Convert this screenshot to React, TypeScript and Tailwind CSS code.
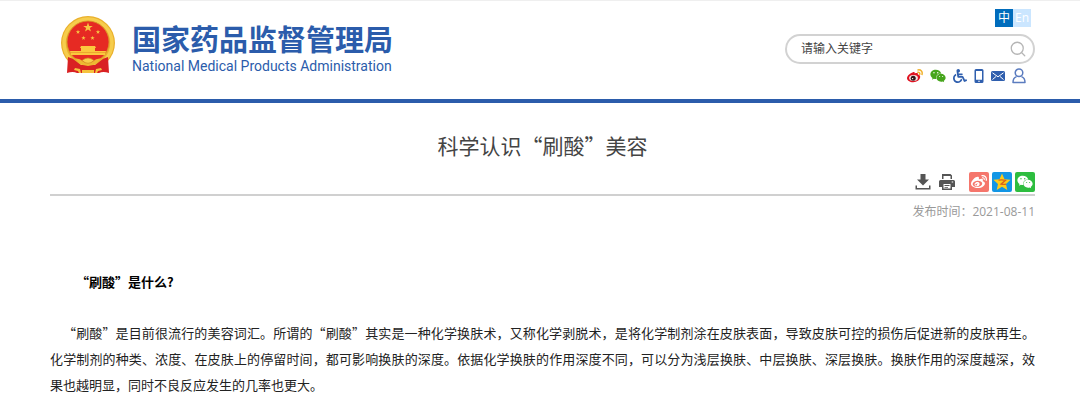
import { Search } from 'lucide-react';
import { FaWeibo, FaWeixin, FaWheelchair } from 'react-icons/fa';

const cjk = "font-['Open_Sans','Noto_Sans_CJK_SC',sans-serif]";

function Star({ x, y, r }: { x: number; y: number; r: number }) {
  return (
    <path
      transform={`translate(${x} ${y}) scale(${r})`}
      d="M0-1 .24-.32.95-.31.38.12.59.81 0 .4-.59.81-.38.12-.95-.31-.24-.32Z"
    />
  );
}

function Emblem() {
  return (
    <svg viewBox="0 0 56 60" className="h-[60px] w-14 shrink-0" aria-hidden="true">
      <circle cx="28" cy="28" r="27" fill="#eab02c" />
      <circle cx="28" cy="28" r="24" fill="none" stroke="#f6cd4c" strokeWidth="3.500" />
      <circle cx="28" cy="27" r="21" fill="#e62a23" stroke="#d9952a" strokeWidth=".8" />
      <g fill="#f8c443">
        <Star x={28} y={12.5} r={5} />
        <Star x={18} y={17} r={2.3} />
        <Star x={38} y={17} r={2.3} />
        <Star x={23.5} y={23} r={2.3} />
        <Star x={32.500} y={23} r={2.3} />
      </g>
      <path d="M21 31h14l1 2h-1v3h11l-1 4H11l-1-4h11v-3h-1Z" fill="#fbc83e" />
      <path d="M10 37.500h36" stroke="#e59a2a" strokeWidth=".7" />
      <path d="M8 42q5 1 9 5l4 3h14l4-3q4-4 9-5l1 16q-6-2-10 0H17q-4-2-10 0Z" fill="#d92123" />
      <path
        d="M15 43.500q5-.5 7.500 2.500 5.500 5 11 0 2.500-3 7.500-2.500l-4 4.500q-4 3-9 3t-9-3Z"
        fill="#edb832"
      />
      <path d="M22 45.500q6-5 12 0-6 5.500-12 0Z" fill="#f8cf4b" stroke="#d58e24" strokeWidth=".7" />
      <path d="m15 53 5 1 1 4h-2l-1-2-4-1Zm26 0-5 1-1 4h2l1-2 4-1ZM22 55h12v3H22Z" fill="#f5c33e" />
    </svg>
  );
}

function WeiboColor() {
  return (
    <svg viewBox="0 0 16 14" className="h-3.5 w-4">
      <path
        d="M6 3.2c1.2-.5 2 .1 1.7 1.2 1.8-.8 3.6-.6 3.2 1 1.2.3 2.4 1 2.3 2.6-.2 3-3.4 5.2-7 5.2C2.800 13.200 0 11.500 0 9.200 0 7 3 4 6 3.200Z"
        fill="#e01220"
      />
      <ellipse cx="6.500" cy="9" rx="4.400" ry="3" fill="#f4e4e4" />
      <circle cx="6.200" cy="9.200" r="2.500" fill="#33191b" />
      <circle cx="5.600" cy="9.600" r=".7" fill="#fff" />
      <path d="M11 .9c3-.5 4.800 2 4 4.500M10.800 3.200c1.500-.2 2.300.8 1.900 2" fill="none" stroke="#f1b22e" strokeWidth="1.500" strokeLinecap="round" />
    </svg>
  );
}

function Phone() {
  return (
    <svg viewBox="0 0 10 14" className="h-3.5 w-2.5" fill="#2f5fae">
      <path fillRule="evenodd" d="M2 0h6q1.500 0 1.500 1.500v11Q9.500 14 8 14H2Q.5 14 .5 12.500v-11Q.5 0 2 0Zm0 2v8.800h6V2Zm2.200 9.700v1h1.600v-1Z" />
    </svg>
  );
}

function Mail() {
  return (
    <svg viewBox="0 0 14 10" className="h-2.5 w-3.5">
      <rect width="14" height="10" rx="1.500" fill="#2f5fae" />
      <path d="m1.500 1.800 5.500 4 5.500-4M1.500 8.500l3.500-3m7.500 3L9 5.500" fill="none" stroke="#fff" strokeWidth="1" />
    </svg>
  );
}

function User() {
  return (
    <svg viewBox="0 0 14 16" className="h-4 w-3.5" fill="none" stroke="#5b7cbf" strokeWidth="1.500">
      <circle cx="7" cy="4.800" r="3.800" />
      <path d="M4.500 8.600C2 9.500 1 11.500 1 14.500h12c0-3-1-5-3.500-5.900" strokeLinejoin="round" />
    </svg>
  );
}

function Download() {
  return (
    <svg viewBox="0 0 16 16" className="size-4" fill="#555">
      <path d="M5.500 0h5v5.500h3.500L8 11.500 2 5.500h3.500ZM.5 11.500H2V14h12v-2.500h1.500v4H.5Z" />
    </svg>
  );
}

function Printer() {
  return (
    <svg viewBox="0 0 16 16" className="size-4" fill="#555">
      <path fillRule="evenodd" d="M3 0h8.500L13 1.500V5h-1.500V2H4.500v3H3ZM1.500 6h13Q16 6 16 7.500V13h-3v3H3v-3H0V7.500Q0 6 1.500 6Zm3 4v4.500h7V10Zm8.200-2.500v1h1.500v-1Z" />
      <path d="M5.500 11h5v1h-5Zm0 2H9v.8H5.500Z" />
    </svg>
  );
}

function QzoneStar() {
  return (
    <svg viewBox="0 0 18 18" className="size-[18px]">
      <path d="m9 .5 2.500 5.700 6.100.6-4.600 4.100 1.300 6.100L9 13.800 3.700 17 5 10.900.4 6.800l6.100-.6Z" fill="#fccb19" />
      <path d="M5.500 7.200q3.500-.7 7 .1L8 11.200q2.500.4 5.200-.1" fill="none" stroke="#d9621c" strokeWidth="1.300" />
    </svg>
  );
}

function Header() {
  return (
    <header className="border-b-4 border-[#2b5cab] bg-white">
      <div className="flex h-[98px] items-start justify-between pl-[60px] pr-[45px]">
        <a href="#home" className="flex gap-4 pt-3.5 text-[#2b5cab]">
          <Emblem />
          <span className="flex flex-col pt-1.5">
            <span className="whitespace-nowrap font-['Noto_Sans_CJK_SC',sans-serif] text-[29px] font-bold leading-[34px]">
              国家药品监督管理局
            </span>
            <span className="whitespace-nowrap font-['Roboto',sans-serif] text-[14px] leading-[22px]">
              National Medical Products Administration
            </span>
          </span>
        </a>
        <div className="flex w-[250px] flex-col items-end pt-2">
          <div className="mr-1 flex text-[12px] leading-[18px] text-white">
            <button type="button" className="w-[18px] bg-[#006cbc]">中</button>
            <button type="button" className="w-[18px] bg-[#cbe6ff]">En</button>
          </div>
          <form className="mt-[7px] flex h-[30px] w-full items-center rounded-full border-2 border-[#d2d2d2] pl-3.5 pr-1.5">
            <input
              type="text"
              aria-label="请输入关键字"
              placeholder="请输入关键字"
              className="min-w-0 flex-1 text-[12px] leading-[18px] outline-none placeholder:text-[#444]"
            />
            <button type="button" aria-label="搜索">
              <Search className="size-[18px] text-[#b5b5b5]" strokeWidth={1.7} />
            </button>
          </form>
          <nav className="mr-[9px] mt-1 flex h-4 items-center gap-[7px]">
            <a href="#weibo" aria-label="微博"><WeiboColor /></a>
            <a href="#weixin" aria-label="微信"><FaWeixin className="size-4 text-[#46a51c]" /></a>
            <a href="#access" aria-label="无障碍"><FaWheelchair className="size-3.5 text-[#2f5fae]" /></a>
            <a href="#mobile" aria-label="手机版"><Phone /></a>
            <a href="#mail" aria-label="邮箱"><Mail /></a>
            <a href="#user" aria-label="用户"><User /></a>
          </nav>
        </div>
      </div>
    </header>
  );
}

export default function App() {
  return (
    <div className={`${cjk} border-t border-[#efefef] bg-white`} lang="zh-CN">
      <Header />
      <main className="pl-[50px] pr-[45px]">
        <h1 className="pt-[26px] text-center font-['Noto_Sans_CJK_SC',sans-serif] text-[21px] leading-8 text-[#444]">
          科学认识“刷酸”美容
        </h1>
        <div className="mt-[11px] flex items-center justify-end border-b-2 border-[#d0d0d0] pb-0.5">
          <button type="button" aria-label="下载" className="mr-2"><Download /></button>
          <button type="button" aria-label="打印" className="mr-3.5"><Printer /></button>
          <div className="flex gap-[3px]">
            <a href="#share-weibo" aria-label="分享到微博" className="flex size-5 items-center justify-center rounded-xs bg-[#f5766c]">
              <FaWeibo className="size-4 text-white" />
            </a>
            <a href="#share-qzone" aria-label="分享到QQ空间" className="flex size-5 items-center justify-center rounded-xs bg-[#1296e5]">
              <QzoneStar />
            </a>
            <a href="#share-weixin" aria-label="分享到微信" className="flex size-5 items-center justify-center rounded-xs bg-[#2dbd3f]">
              <FaWeixin className="size-4 text-white" />
            </a>
          </div>
        </div>
        <p className="mt-1.5 text-right text-[12px] leading-5 text-[#999]">发布时间：2021-08-11</p>
        <article className="mt-[47px] font-['Noto_Sans_CJK_SC',sans-serif] text-[13px] leading-[26px] text-[#222]">
          <h2 className="indent-[26px] font-bold text-black">“刷酸”是什么?</h2>
          <p className="mt-[25px] indent-[13px] text-justify">
            “刷酸”是目前很流行的美容词汇。所谓的“刷酸”其实是一种化学换肤术，又称化学剥脱术，是将化学制剂涂在皮肤表面，导致皮肤可控的损伤后促进新的皮肤再生。化学制剂的种类、浓度、在皮肤上的停留时间，都可影响换肤的深度。依据化学换肤的作用深度不同，可以分为浅层换肤、中层换肤、深层换肤。换肤作用的深度越深，效果也越明显，同时不良反应发生的几率也更大。
          </p>
        </article>
      </main>
    </div>
  );
}
